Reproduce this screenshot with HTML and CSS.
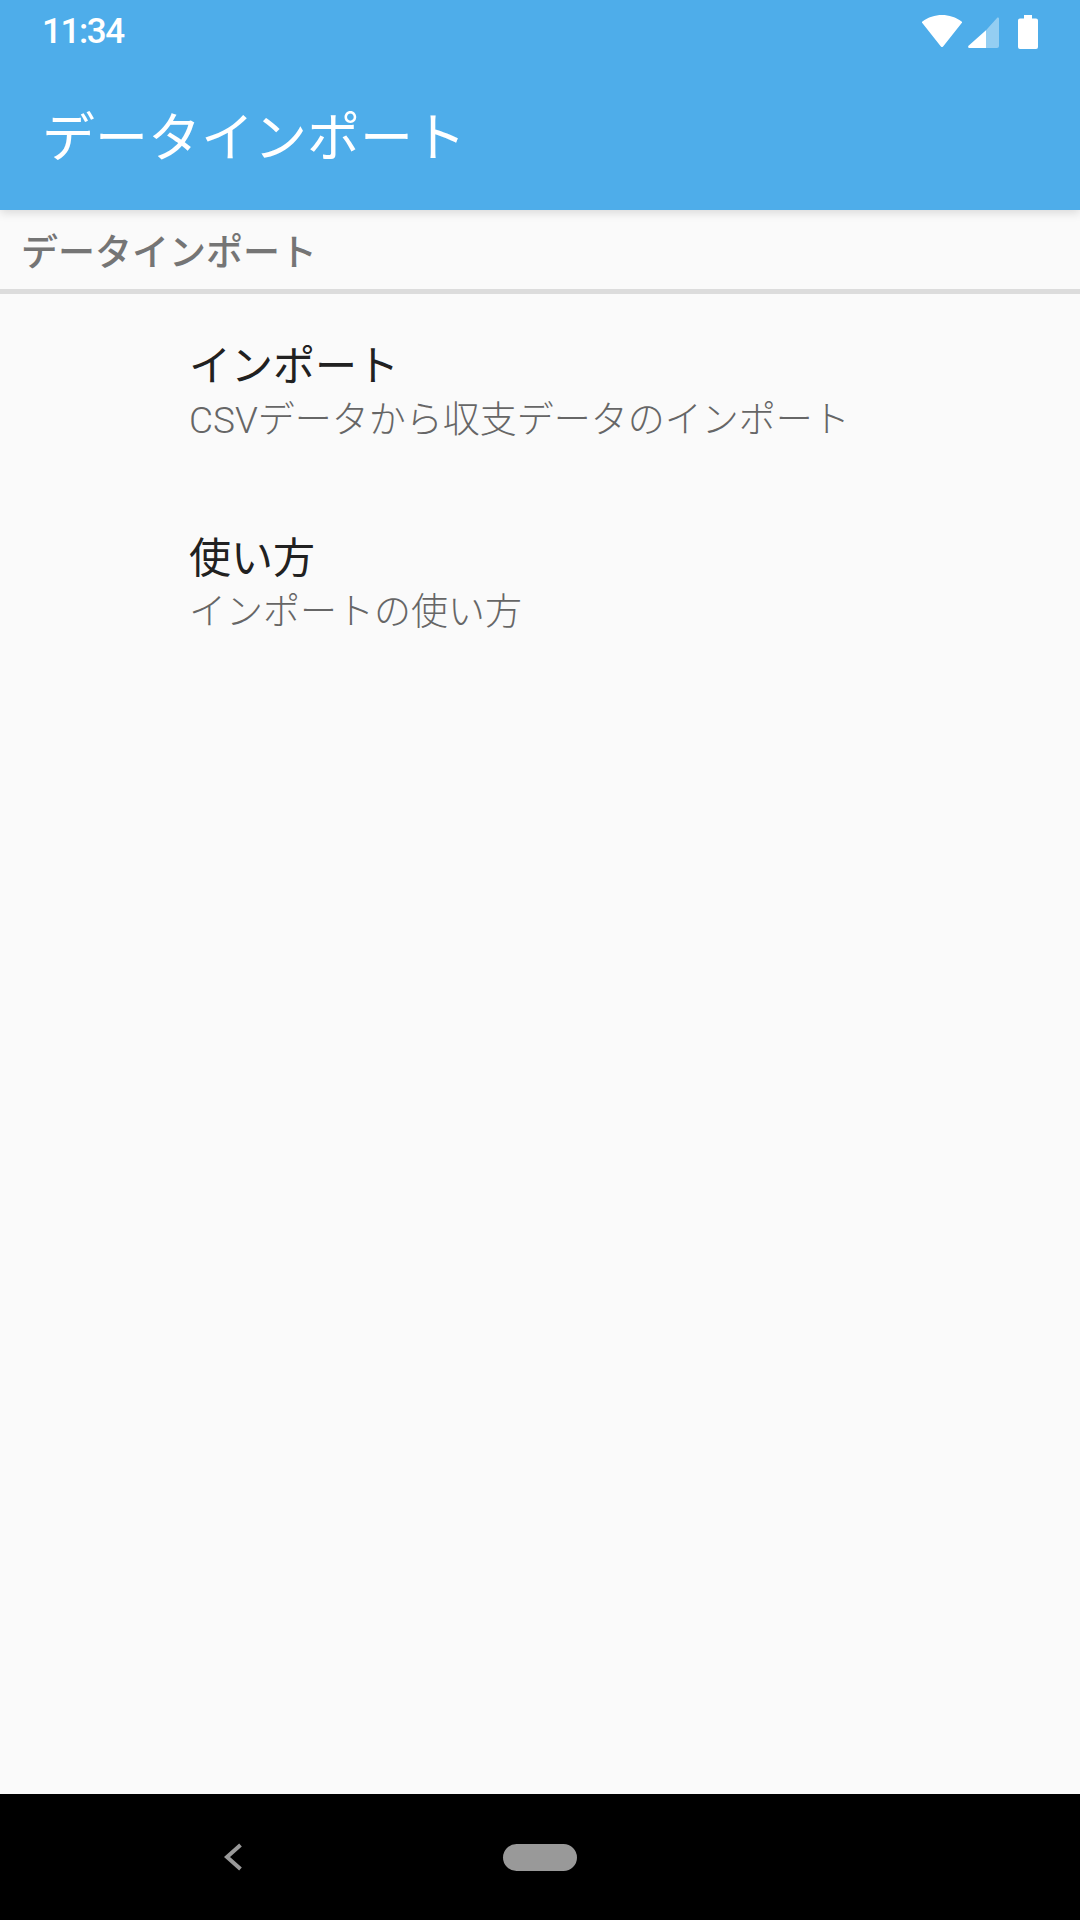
FILE: index.html
```html
<!DOCTYPE html>
<html lang="ja">
<head>
<meta charset="utf-8">
<title>データインポート</title>
<link rel="stylesheet" href="styles.css">
</head>
<body>
<div class="screen">
  <header class="appbar">
    <div class="status">
      <span class="time">11:34</span>
      <div class="status-icons">
        <svg class="ic-wifi" viewBox="0 0 40 32"><path d="M20 0C27 0 34 2.2 39.6 6.6a1 1 0 0 1 .1 1.5L21.3 31.3a1.7 1.7 0 0 1-2.6 0L.3 8.1a1 1 0 0 1 .1-1.5C6 2.2 13 0 20 0Z" fill="#fff"/></svg>
        <svg class="ic-signal" viewBox="0 0 31 31"><path d="M18 13.2 29 1c.7-.8 2-.3 2 .8V29a2 2 0 0 1-2 2H18Z" fill="#fff" fill-opacity=".4"/><path d="M18 13.2V31H1.5c-1.2 0-1.8-1.4-1-2.3Z" fill="#fff"/></svg>
        <svg class="ic-battery" viewBox="0 0 20 34"><path d="M6 0h8v3.5h4a2 2 0 0 1 2 2V32a2 2 0 0 1-2 2H2a2 2 0 0 1-2-2V5.500a2 2 0 0 1 2-2h4Z" fill="#fff"/></svg>
      </div>
    </div>
    <div class="toolbar"><h1 class="title">データインポート</h1></div>
  </header>
  <main class="content">
    <h2 class="section">データインポート</h2>
    <ul class="list">
      <li class="item">
        <div class="item-title">インポート</div>
        <div class="item-sub">CSVデータから収支データのインポート</div>
      </li>
      <li class="item">
        <div class="item-title">使い方</div>
        <div class="item-sub">インポートの使い方</div>
      </li>
    </ul>
  </main>
  <nav class="navbar">
    <svg class="ic-back" viewBox="0 0 18 28"><path d="M16.500 2 3 14l13.500 12" fill="none" stroke="#999" stroke-width="4"/></svg>
    <span class="pill"></span>
  </nav>
</div>
</body>
</html>
```

FILE: styles.css
```css
* { box-sizing: border-box; }
html, body { margin: 0; padding: 0; }
body {
  width: 1080px;
  height: 1920px;
  overflow: hidden;
  background: #fafafa;
  font-family: "Noto Sans CJK JP", Roboto, sans-serif;
}
.screen { display: flex; flex-direction: column; height: 1920px; }
.appbar {
  position: relative;
  z-index: 1;
  flex: none;
  height: 210px;
  background: #4eadea;
  color: #fff;
  box-shadow: 0 3px 9px rgba(0, 0, 0, .13);
}
.status {
  height: 63px;
  padding: 0 42px;
  display: flex;
  align-items: center;
  justify-content: space-between;
}
.time { font: 500 35px/1 Roboto, sans-serif; letter-spacing: -1.4px; }
.status-icons { display: flex; align-items: flex-start; padding-top: 1px; }
.ic-wifi { width: 40px; height: 32px; margin-right: 6px; }
.ic-signal { width: 31px; height: 31px; margin-top: 2px; margin-right: 19px; }
.ic-battery { width: 20px; height: 34px; }
.toolbar { height: 147px; display: flex; align-items: center; padding: 0 0 0 42px; }
.title { margin: 0; font-size: 53px; font-weight: 400; line-height: 1; position: relative; top: -2px; }
.content { flex: 1; }
.section {
  margin: 0;
  height: 84px;
  padding: 0 0 0 21px;
  display: flex;
  align-items: center;
  font-size: 37px;
  font-weight: 500;
  color: #757575;
  background: #fafafa;
  border-bottom: 5px solid #dcdcdc;
}
.list { list-style: none; margin: 0; padding: 0; }
.item { height: 192px; padding: 41px 0 0 189px; }
.item-title { font-size: 42px; line-height: 56px; color: #212121; }
.item-sub { margin-top: 4.500px; font-size: 37px; line-height: 50px; font-weight: 300; color: #666; font-family: Roboto, "Noto Sans CJK JP", sans-serif; }
.navbar {
  flex: none;
  height: 126px;
  background: #000;
  position: relative;
  display: flex;
  align-items: center;
  justify-content: center;
}
.pill { width: 74px; height: 27px; border-radius: 14px; background: #999; }
.ic-back { position: absolute; left: 224px; top: 49px; width: 18px; height: 28px; }
```
